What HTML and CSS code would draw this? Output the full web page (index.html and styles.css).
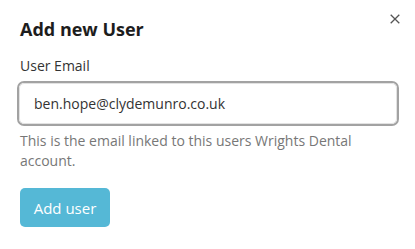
FILE: index.html
```html
<!DOCTYPE html>
<html lang="en">
<head>
    <meta charset="UTF-8"/>
    <title>Add new User</title>
    <link rel="stylesheet" href="styles.css">
</head>
<body>
    <div class="modal">
        <div class="modal-header">
            <div class="modal-title">Add new User</div>
            <button class="close-button" type="button" aria-label="Close">
                <svg width="10" height="10" viewBox="0 0 10 10">
                    <path d="M0.7 0.7 L9.3 9.3 M9.3 0.7 L0.7 9.3" stroke="#555" stroke-width="1.3" fill="none"/>
                </svg>
            </button>
        </div>

        <form class="modal-form" onsubmit="return false;">
            <label class="form-label" for="email">User Email</label>
            <div class="input-wrap">
                <input id="email" class="form-input" type="text" value="ben.hope@clydemunro.co.uk"/>
            </div>
            <p class="help-text">This is the email linked to this users Wrights Dental account.</p>
            <button class="submit-button" type="submit">Add user</button>
        </form>
    </div>
</body>
</html>
```

FILE: styles.css
```css
body {
    margin: 0;
    padding: 0;
    font-family: 'Open Sans', 'Liberation Sans', sans-serif;
    background-color: #fff;
    color: #222;
}

.modal {
    padding: 14px 15px 20px 20px;
}

.modal-header {
    display: flex;
    justify-content: space-between;
    align-items: flex-start;
}

.modal-title {
    font-size: 18px;
    font-weight: 700;
    color: #1d1d1d;
    margin-top: 3px;
}

.close-button {
    border: none;
    background: none;
    padding: 0;
    width: 10px;
    height: 10px;
    display: flex;
    cursor: pointer;
}

.modal-form {
    display: flex;
    flex-direction: column;
    align-items: flex-start;
    margin-top: 15px;
}

.form-label {
    font-size: 14px;
    color: #333;
    margin-bottom: 6px;
}

.input-wrap {
    width: 378px;
    margin-left: -3px;
    border: 2px solid #a2a2a2;
    border-radius: 7px;
}

.form-input {
    box-sizing: border-box;
    width: 100%;
    height: 41px;
    border: 1px solid #e2e2e2;
    border-radius: 5px;
    outline: none;
    padding: 0 14px;
    font-family: 'Open Sans', 'Liberation Sans', sans-serif;
    font-size: 14px;
    color: #333;
}

.help-text {
    font-size: 14px;
    color: #777;
    line-height: 20px;
    margin: 5px 20px 0 0;
}

.submit-button {
    margin-top: 17px;
    width: 90px;
    height: 39px;
    border: none;
    border-radius: 5px;
    background-color: #55b8d6;
    color: #fff;
    font-family: 'Open Sans', 'Liberation Sans', sans-serif;
    font-size: 15px;
    cursor: pointer;
}
```
